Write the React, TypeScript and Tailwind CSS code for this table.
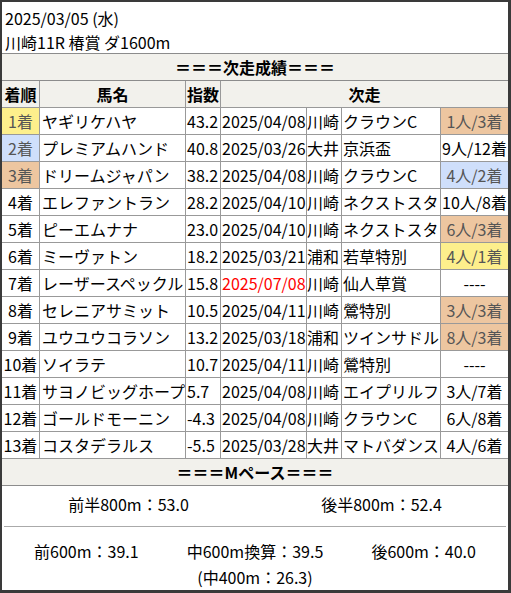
const rows = [
  { rank: "1着", rankBg: "bg-[#fdef8c] text-[#555]", name: "ヤギリケハヤ", idx: "43.2", date: "2025/04/08", place: "川崎", race: "クラウンC", res: "1人/3着", resBg: "bg-[#edc6a0] text-[#555]" },
  { rank: "2着", rankBg: "bg-[#cfdffb] text-[#555]", name: "プレミアムハンド", idx: "40.8", date: "2025/03/26", place: "大井", race: "京浜盃", res: "9人/12着", resBg: "" },
  { rank: "3着", rankBg: "bg-[#edc6a0] text-[#555]", name: "ドリームジャパン", idx: "38.2", date: "2025/04/08", place: "川崎", race: "クラウンC", res: "4人/2着", resBg: "bg-[#cfdffb] text-[#555]" },
  { rank: "4着", rankBg: "", name: "エレファントラン", idx: "28.2", date: "2025/04/10", place: "川崎", race: "ネクストスタ", res: "10人/8着", resBg: "" },
  { rank: "5着", rankBg: "", name: "ピーエムナナ", idx: "23.0", date: "2025/04/10", place: "川崎", race: "ネクストスタ", res: "6人/3着", resBg: "bg-[#edc6a0] text-[#555]" },
  { rank: "6着", rankBg: "", name: "ミーヴァトン", idx: "18.2", date: "2025/03/21", place: "浦和", race: "若草特別", res: "4人/1着", resBg: "bg-[#fdef8c] text-[#555]" },
  { rank: "7着", rankBg: "", name: "レーザースペックル", idx: "15.8", date: "2025/07/08", red: true, place: "川崎", race: "仙人草賞", res: "----", resBg: "" },
  { rank: "8着", rankBg: "", name: "セレニアサミット", idx: "10.5", date: "2025/04/11", place: "川崎", race: "鶯特別", res: "3人/3着", resBg: "bg-[#edc6a0] text-[#555]" },
  { rank: "9着", rankBg: "", name: "ユウユウコラソン", idx: "13.2", date: "2025/03/18", place: "浦和", race: "ツインサドル", res: "8人/3着", resBg: "bg-[#edc6a0] text-[#555]" },
  { rank: "10着", rankBg: "", name: "ソイラテ", idx: "10.7", date: "2025/04/11", place: "川崎", race: "鶯特別", res: "----", resBg: "" },
  { rank: "11着", rankBg: "", name: "サヨノビッグホープ", idx: "5.7", date: "2025/04/08", place: "川崎", race: "エイプリルフ", res: "3人/7着", resBg: "" },
  { rank: "12着", rankBg: "", name: "ゴールドモーニン", idx: "-4.3", date: "2025/04/08", place: "川崎", race: "クラウンC", res: "6人/8着", resBg: "" },
  { rank: "13着", rankBg: "", name: "コスタデラルス", idx: "-5.5", date: "2025/03/28", place: "大井", race: "マトバダンス", res: "4人/6着", resBg: "" },
];

const cols = "grid grid-cols-[38px_146px_35px_86px_35px_99px_67px]";
const cell = "border-r border-[#999] h-full flex items-center whitespace-nowrap overflow-hidden";

export default function App() {
  return (
    <div className="w-[511px] h-[593px] bg-white border-l-2 border-t-2 border-r-[3px] border-b-[3px] border-[#3a3a3a] flex flex-col font-['Noto_Sans_CJK_JP',sans-serif] text-base leading-6 text-black">
      {/* race info */}
      <div className="h-[52px] border-b border-[#8c8c8c] pt-[4px] px-[3px]">
        <p>2025/03/05 (水)</p>
        <p>川崎11R 椿賞 ダ1600m</p>
      </div>

      <div className="h-[27px] border-b border-[#8c8c8c] bg-[#f2f1ec] flex items-center justify-center font-bold">
        ＝＝＝次走成績＝＝＝
      </div>

      <div className={`${cols} h-[27px] border-b border-[#999] bg-[#f2f1ec] font-bold`}>
        <div className={`${cell} justify-center`}>着順</div>
        <div className={`${cell} justify-center`}>馬名</div>
        <div className={`${cell} justify-center`}>指数</div>
        <div className="col-span-4 h-full flex items-center justify-center">次走</div>
      </div>

      {rows.map((r) => (
        <div key={r.rank} className={`${cols} h-[27px] border-b border-[#999]`}>
          <div className={`${cell} justify-center ${r.rankBg}`}>{r.rank}</div>
          <div className={`${cell} pl-[2px]`}>{r.name}</div>
          <div className={`${cell} pl-px`}>{r.idx}</div>
          <div className={`${cell} pl-px ${r.red ? "text-[#ff0000]" : ""}`}>{r.date}</div>
          <div className={`${cell}`}>{r.place}</div>
          <div className={`${cell} pl-px`}>{r.race}</div>
          <div className={`h-full flex items-center justify-center whitespace-nowrap ${r.resBg}`}>{r.res}</div>
        </div>
      ))}

      <div className="h-[27px] border-b border-[#8c8c8c] bg-[#f2f1ec] flex items-center justify-center font-bold">
        ＝＝＝Mペース＝＝＝
      </div>

      {/* pace */}
      <div className="flex-1 flex flex-col">
        <div className="grid grid-cols-2 pt-[6px] pb-[10px] text-center">
          <p>前半800m：53.0</p>
          <p>後半800m：52.4</p>
        </div>
        <div className="h-px mx-[2px] bg-[#aaa]" />
        <div className="grid grid-cols-3 pt-[11px] text-center leading-[26px]">
          <p>前600m：39.1</p>
          <p>
            中600m換算：39.5
            <br />
            (中400m：26.3)
          </p>
          <p>後600m：40.0</p>
        </div>
      </div>
    </div>
  );
}
